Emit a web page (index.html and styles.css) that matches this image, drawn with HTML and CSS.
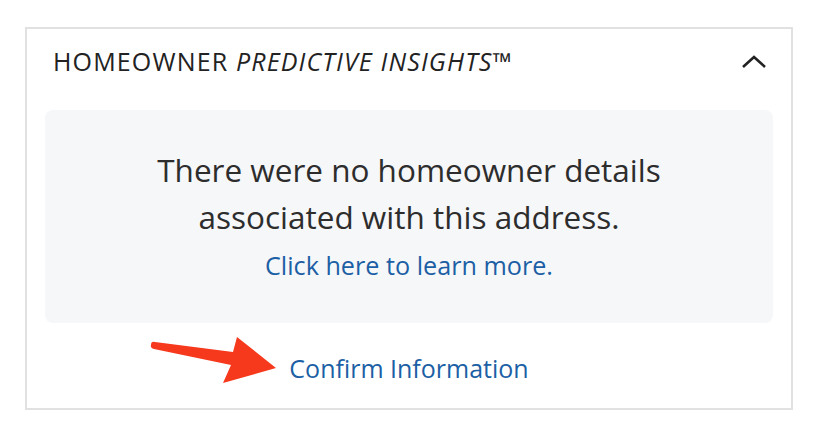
FILE: index.html
```html
<!DOCTYPE html>
<html>
<head>
<meta charset="utf-8">
<link rel="stylesheet" href="styles.css">
</head>
<body>
<div class="page">
  <section class="card">
    <header class="card-head">
      <h2 class="title">HOMEOWNER <em>PREDICTIVE INSIGHTS</em>™</h2>
      <svg class="chevron" width="26" height="16" viewBox="0 0 26 16"><path d="M2 13 L13 3 L24 13" fill="none" stroke="#222" stroke-width="2.6"/></svg>
    </header>
    <div class="notice">
      <p class="msg">There were no homeowner details<br>associated with this address.</p>
      <a class="learn" href="#">Click here to learn more.</a>
    </div>
    <div class="confirm-row">
      <a class="confirm" href="#">Confirm Information</a>
      <svg class="arrow" width="140" height="56" viewBox="0 0 140 56"><path d="M6 13 Q6 9 10 10 L88 20 L92 5 L131 36 L78 51 L86 33 L9 17 Q5 16 6 13 Z" fill="#f6391c"/></svg>
    </div>
  </section>
</div>
</body>
</html>
```
FILE: styles.css
```css
html, body { margin: 0; padding: 0; background: #fff; }
body { font-family: "Open Sans", "Noto Sans", sans-serif; color: #2b2b2b; }
.page { padding: 27px 23px 30px 25px; }
.card {
  border: 2px solid #e1e1e1;
  box-sizing: border-box;
  width: 768px;
  height: 383px;
  padding: 0 18px 0 18px;
}
.card-head {
  display: flex;
  align-items: center;
  justify-content: space-between;
  height: 64px;
  margin-bottom: 17px;
  padding: 0 0 0 8px;
}
.title {
  margin: 0;
  font-weight: 400;
  font-size: 25px;
  letter-spacing: 1.15px;
  color: #222;
}
.title em { font-style: italic; }
.chevron { margin-right: 6px; margin-top: 2px; }
.notice {
  background: #f6f7f9;
  border-radius: 8px;
  height: 213px;
  box-sizing: border-box;
  padding-top: 36px;
  text-align: center;
}
.msg {
  margin: 0;
  font-size: 31.5px;
  line-height: 47px;
  color: #2d2d2d;
}
.learn {
  display: inline-block;
  margin-top: 8px;
  font-size: 25.2px;
  color: #1c5fa5;
  text-decoration: none;
}
.confirm-row {
  position: relative;
  text-align: center;
  padding-top: 28px;
}
.confirm {
  font-size: 25px;
  color: #1c5fa5;
  text-decoration: none;
}
.arrow { position: absolute; left: 100px; top: 9px; }
```
